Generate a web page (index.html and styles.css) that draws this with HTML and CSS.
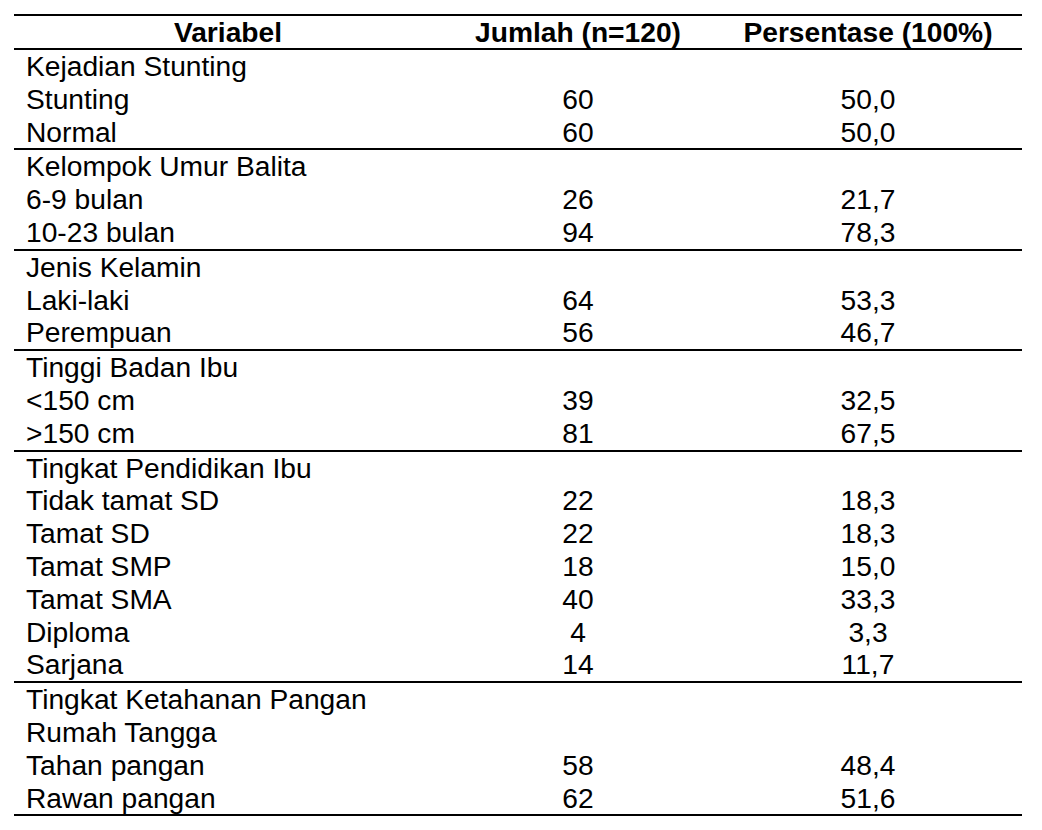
FILE: index.html
```html
<!DOCTYPE html>
<html lang="id">
<head>
<meta charset="utf-8">
<title>Karakteristik Responden</title>
<link rel="stylesheet" href="styles.css">
</head>
<body>
<div class="table">
  <div class="row head">
    <div class="c1">Variabel</div>
    <div class="c2">Jumlah (n=120)</div>
    <div class="c3">Persentase (100%)</div>
  </div>
  <div class="group">
    <div class="row"><div class="c1">Kejadian Stunting</div><div class="c2"></div><div class="c3"></div></div>
    <div class="row"><div class="c1">Stunting</div><div class="c2">60</div><div class="c3">50,0</div></div>
    <div class="row"><div class="c1">Normal</div><div class="c2">60</div><div class="c3">50,0</div></div>
  </div>
  <div class="group">
    <div class="row"><div class="c1">Kelompok Umur Balita</div><div class="c2"></div><div class="c3"></div></div>
    <div class="row"><div class="c1">6-9 bulan</div><div class="c2">26</div><div class="c3">21,7</div></div>
    <div class="row"><div class="c1">10-23 bulan</div><div class="c2">94</div><div class="c3">78,3</div></div>
  </div>
  <div class="group">
    <div class="row"><div class="c1">Jenis Kelamin</div><div class="c2"></div><div class="c3"></div></div>
    <div class="row"><div class="c1">Laki-laki</div><div class="c2">64</div><div class="c3">53,3</div></div>
    <div class="row"><div class="c1">Perempuan</div><div class="c2">56</div><div class="c3">46,7</div></div>
  </div>
  <div class="group">
    <div class="row"><div class="c1">Tinggi Badan Ibu</div><div class="c2"></div><div class="c3"></div></div>
    <div class="row"><div class="c1">&lt;150 cm</div><div class="c2">39</div><div class="c3">32,5</div></div>
    <div class="row"><div class="c1">&gt;150 cm</div><div class="c2">81</div><div class="c3">67,5</div></div>
  </div>
  <div class="group">
    <div class="row"><div class="c1">Tingkat Pendidikan Ibu</div><div class="c2"></div><div class="c3"></div></div>
    <div class="row"><div class="c1">Tidak tamat SD</div><div class="c2">22</div><div class="c3">18,3</div></div>
    <div class="row"><div class="c1">Tamat SD</div><div class="c2">22</div><div class="c3">18,3</div></div>
    <div class="row"><div class="c1">Tamat SMP</div><div class="c2">18</div><div class="c3">15,0</div></div>
    <div class="row"><div class="c1">Tamat SMA</div><div class="c2">40</div><div class="c3">33,3</div></div>
    <div class="row"><div class="c1">Diploma</div><div class="c2">4</div><div class="c3">3,3</div></div>
    <div class="row"><div class="c1">Sarjana</div><div class="c2">14</div><div class="c3">11,7</div></div>
  </div>
  <div class="group">
    <div class="row"><div class="c1">Tingkat Ketahanan Pangan</div><div class="c2"></div><div class="c3"></div></div>
    <div class="row"><div class="c1">Rumah Tangga</div><div class="c2"></div><div class="c3"></div></div>
    <div class="row"><div class="c1">Tahan pangan</div><div class="c2">58</div><div class="c3">48,4</div></div>
    <div class="row"><div class="c1">Rawan pangan</div><div class="c2">62</div><div class="c3">51,6</div></div>
  </div>
</div>
</body>
</html>
```

FILE: styles.css
```css
html, body {
  margin: 0;
  padding: 0;
  background: #ffffff;
}

body {
  font-family: "Liberation Sans", Arial, sans-serif;
  font-size: 28.2px;
  color: #000000;
}

.table {
  margin: 14px 0 0 14px;
  width: 1008px;
}

.row {
  display: grid;
  grid-template-columns: 428px 272px 308px;
  height: 32.8px;
  line-height: 32.8px;
  white-space: nowrap;
}

.row .c1 {
  padding-left: 12px;
}

.row .c2,
.row .c3 {
  text-align: center;
}

.head {
  height: 32px;
  line-height: 32px;
  font-weight: bold;
  border-top: 2px solid #000;
  border-bottom: 2px solid #000;
}

.head .c1 {
  padding-left: 0;
  text-align: center;
}

.group {
  border-bottom: 2px solid #000;
}
```
